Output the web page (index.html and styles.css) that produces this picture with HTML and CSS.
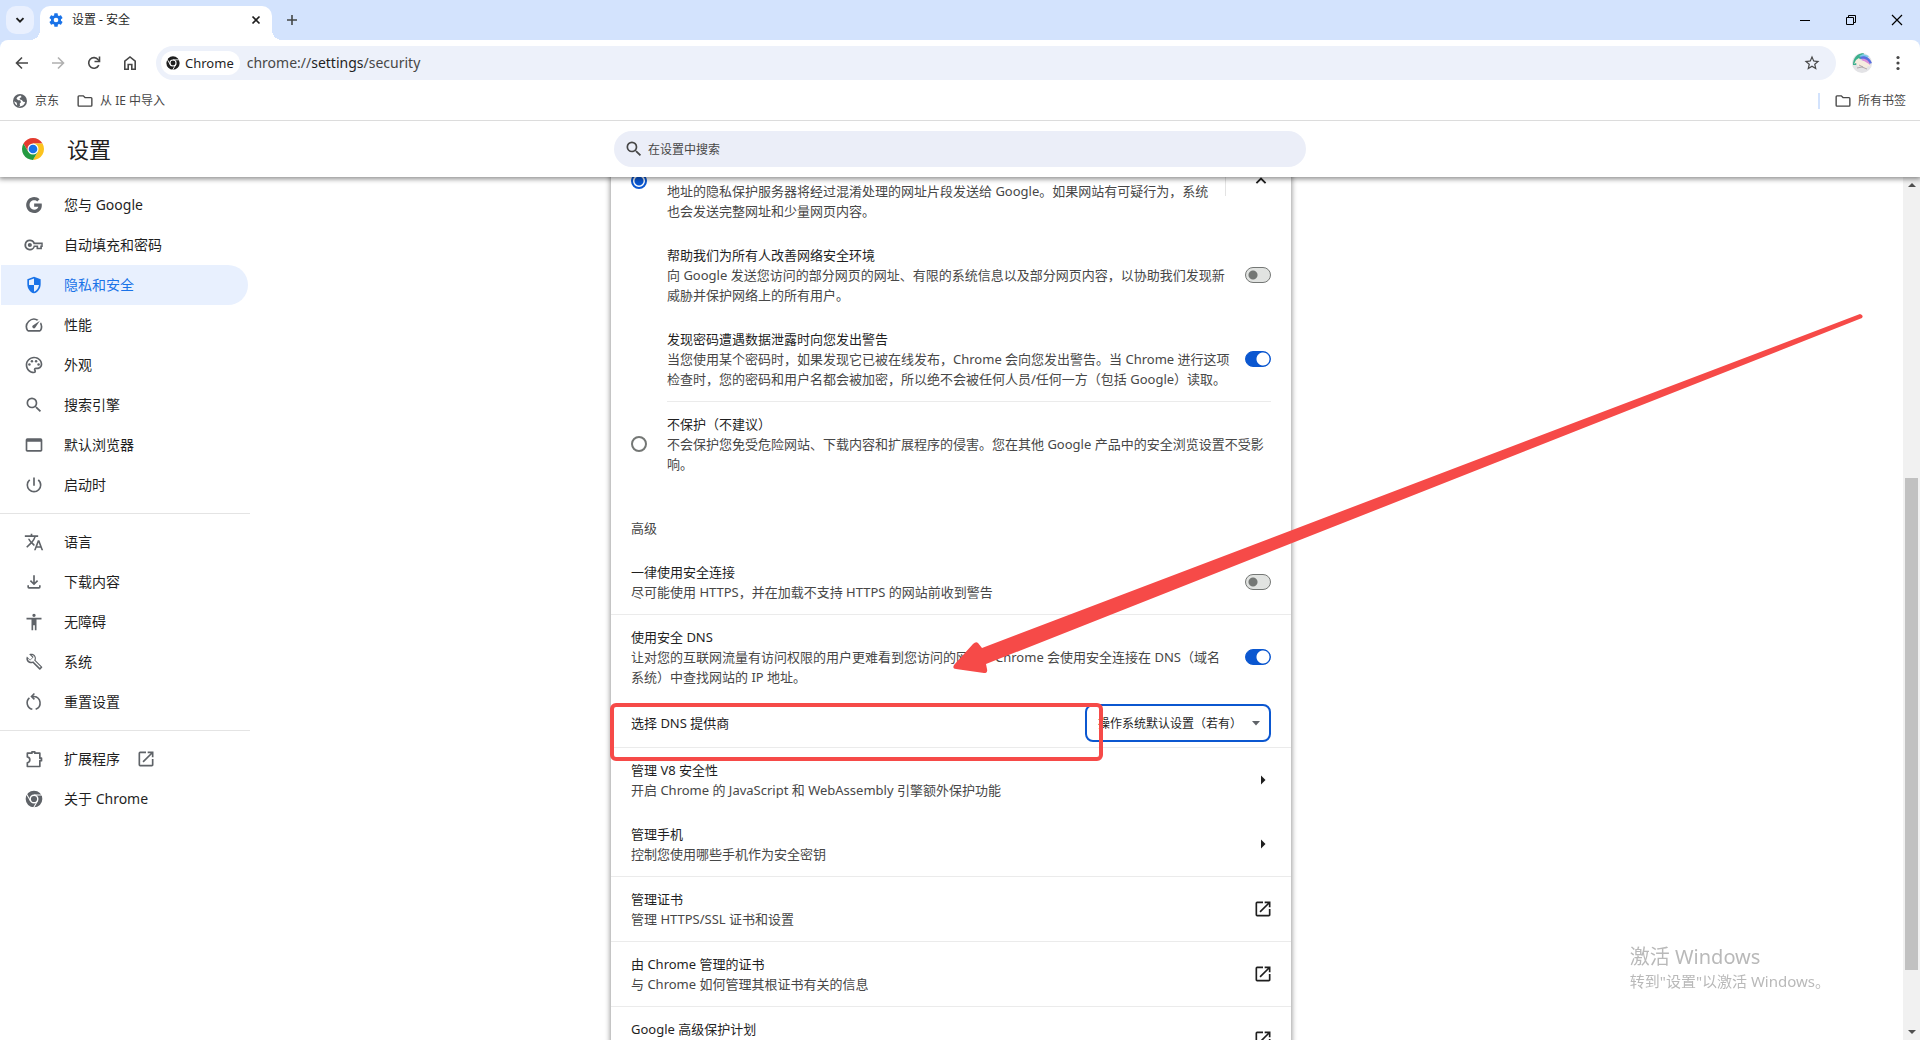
FILE: index.html
```html
<!DOCTYPE html>
<html lang="zh-CN">
<head>
<meta charset="utf-8">
<title>设置 - 安全</title>
<link rel="stylesheet" href="styles.css">
</head>
<body>
<svg class="sprite" aria-hidden="true">
  <symbol id="i-chrome" viewBox="0 0 24 24"><path fill-rule="evenodd" d="M12 2a10 10 0 1 0 0 20a10 10 0 0 0 0-20zM12 6.600a5.400 5.400 0 1 1 0 10.800a5.400 5.400 0 0 1 0-10.800z"/><circle cx="12" cy="12" r="3.700"/><g class="cut"><path d="M12 7.200h10"/><path d="M12 7.200h10" transform="rotate(120 12 12)"/><path d="M12 7.200h10" transform="rotate(240 12 12)"/></g></symbol>
  <symbol id="i-folder" viewBox="0 0 18 14"><path d="M2 1h5l2 2h7a1 1 0 0 1 1 1v8a1 1 0 0 1-1 1H2a1 1 0 0 1-1-1V2a1 1 0 0 1 1-1z" fill="none" stroke="currentColor" stroke-width="1.600"/></symbol>
  <symbol id="i-search" viewBox="0 0 24 24"><path d="M15.500 14h-.790l-.280-.270A6.471 6.471 0 0 0 16 9.500 6.500 6.500 0 1 0 9.500 16c1.610 0 3.090-.590 4.230-1.570l.270.280v.790l5 4.990L20.490 19l-4.990-5zm-6 0C7.010 14 5 11.990 5 9.500S7.010 5 9.500 5 14 7.010 14 9.500 11.990 14 9.500 14z"/></symbol>
  <symbol id="i-open" viewBox="0 0 24 24"><path d="M19 19H5V5h7V3H5a2 2 0 0 0-2 2v14a2 2 0 0 0 2 2h14c1.100 0 2-.900 2-2v-7h-2v7zM14 3v2h3.590l-9.830 9.830 1.410 1.410L19 6.410V10h2V3h-7z"/></symbol>
</svg>

<header class="browser">
  <div class="tabstrip">
    <button class="tab-search" aria-label="搜索标签页"><svg width="12" height="12" viewBox="0 0 12 12"><path d="M2.500 4.200 6 7.700l3.500-3.500" fill="none" stroke="currentColor" stroke-width="1.900"/></svg></button>
    <div class="tab">
      <svg class="gear" width="16" height="16" viewBox="0 0 24 24"><path d="M19.430 12.980c.040-.320.070-.640.070-.980s-.030-.660-.070-.980l2.110-1.650c.190-.150.240-.420.120-.640l-2-3.460c-.120-.220-.390-.300-.610-.220l-2.490 1c-.520-.400-1.080-.730-1.690-.980l-.380-2.650A.488.488 0 0 0 14 2h-4c-.250 0-.460.180-.490.420l-.380 2.650c-.610.250-1.170.590-1.690.980l-2.490-1c-.230-.090-.490 0-.610.220l-2 3.460c-.130.220-.070.490.120.640l2.110 1.650c-.040.320-.070.650-.070.980s.030.660.070.980l-2.110 1.650c-.190.150-.240.420-.120.640l2 3.460c.120.220.390.300.610.220l2.490-1c.520.400 1.080.730 1.690.980l.380 2.650c.030.240.240.420.490.420h4c.250 0 .460-.180.490-.420l.380-2.650c.610-.250 1.170-.590 1.690-.980l2.490 1c.230.090.490 0 .610-.220l2-3.460c.120-.220.070-.490-.120-.640l-2.110-1.650zM12 15.500a3.500 3.500 0 1 1 0-7 3.500 3.500 0 0 1 0 7z"/></svg>
      <span class="tab-title">设置 - 安全</span>
      <button class="plain" aria-label="关闭标签页"><svg width="16" height="16" viewBox="0 0 16 16"><path d="m4.500 4.500 7 7m0-7-7 7" stroke="currentColor" stroke-width="1.700"/></svg></button>
    </div>
    <button class="plain new-tab" aria-label="新标签页"><svg width="16" height="16" viewBox="0 0 16 16"><path d="M8 3v10M3 8h10" stroke="currentColor" stroke-width="1.600"/></svg></button>
    <div class="window-buttons">
      <button class="plain" aria-label="最小化"><svg width="12" height="12" viewBox="0 0 12 12"><path d="M1 6.500h10" stroke="currentColor"/></svg></button>
      <button class="plain" aria-label="还原"><svg width="12" height="12" viewBox="0 0 12 12"><path d="M1.500 3.500h7v7h-7zM3.500 3V1.500h7v7H9" fill="none" stroke="currentColor"/></svg></button>
      <button class="plain" aria-label="关闭"><svg width="12" height="12" viewBox="0 0 12 12"><path d="m1 1 10 10m0-10L1 11" stroke="currentColor" stroke-width="1.200"/></svg></button>
    </div>
  </div>
  <div class="chrome-body">
    <div class="toolbar">
      <button class="plain nav" aria-label="后退"><svg width="16" height="16" viewBox="0 0 16 16"><path d="M14 8H3M8 2.500 2.500 8 8 13.500" fill="none" stroke="currentColor" stroke-width="1.600"/></svg></button>
      <button class="plain nav off" aria-label="前进" disabled><svg width="16" height="16" viewBox="0 0 16 16"><path d="M2 8h11M8 2.500 13.500 8 8 13.500" fill="none" stroke="currentColor" stroke-width="1.600"/></svg></button>
      <button class="plain nav" aria-label="重新加载"><svg width="16" height="16" viewBox="0 0 16 16"><path d="M12.800 10.200A5.300 5.300 0 1 1 12.200 4.700L13.500 6" fill="none" stroke="currentColor" stroke-width="1.600"/><path d="M13.500 1.500v5h-5" fill="none" stroke="currentColor" stroke-width="1.600"/></svg></button>
      <button class="plain nav" aria-label="主页"><svg width="16" height="16" viewBox="0 0 16 16"><path d="M2.800 6.200 8 2l5.200 4.200v8h-3.400V9.500H6.200v4.700H2.800z" fill="none" stroke="currentColor" stroke-width="1.600"/></svg></button>
      <div class="omnibox">
        <span class="chip"><svg width="16" height="16"><use href="#i-chrome"/></svg>Chrome</span>
        <span class="url">chrome://<b>settings</b>/security</span>
        <button class="plain star" aria-label="为此页添加书签"><svg width="18" height="18" viewBox="0 0 24 24"><path d="m22 9.240-7.190-.620L12 2 9.190 8.630 2 9.240l5.460 4.730L5.820 21 12 17.270 18.180 21l-1.630-7.030L22 9.240zM12 15.400l-3.760 2.270 1-4.280-3.320-2.880 4.380-.380L12 6.100l1.710 4.040 4.380.380-3.320 2.880 1 4.280L12 15.400z"/></svg></button>
      </div>
      <button class="plain avatar" aria-label="个人资料"><svg width="20" height="20" viewBox="0 0 20 20"><defs><clipPath id="round"><circle cx="10" cy="10" r="10"/></clipPath></defs><g clip-path="url(#round)"><path fill="#e3e3e6" d="M0 0h20v20H0z"/><path fill="#3bb08c" d="M1 12C1 5 5 0 12 0l-1 4-5 4-2 4z"/><path fill="#7ccbe8" d="M7 3l4-2 6 2-2 2-6-1z"/><path fill="#5a6fe0" d="M8 4c5-2 10 1 12 6l-3 1c-1-3-4-5-8-5z"/><path fill="#d98fd8" d="M9 6c4-1 8 1 9 6l-2 0-5-4z"/><path fill="#f6ecdf" d="M4 7l3-2 2 3 3 0 5 3 2 3-3-1-2 3-3-3-5 0-2-3-2 1z"/><path fill="none" stroke="#a59a9c" stroke-width=".8" d="M5 15l5-1 5 2M7 12l4 2"/></g></svg></button>
      <button class="plain menu" aria-label="菜单"><svg width="16" height="16" viewBox="0 0 16 16"><circle cx="8" cy="2.500" r="1.600"/><circle cx="8" cy="8" r="1.600"/><circle cx="8" cy="13.500" r="1.600"/></svg></button>
    </div>
    <nav class="bookmarks" aria-label="书签">
      <a href="#"><svg width="16" height="16" viewBox="0 0 16 16"><circle cx="8" cy="8" r="7" fill="#5f6368"/><path fill="#fff" d="M8.500 2.500c-2 .5-3.500 1.500-4 3.200l1.700 1.600h2L9 9.200 7.700 10.500 8 13l-1.500.2C9.500 14 12.500 12 13.200 9l-2-.2L9.800 7 8 6.500 7.600 5.200 9.600 4z"/><path fill="#fff" d="m2.200 8.300 2.500 1.500.5 2.700C3.500 11.600 2.500 10.200 2.200 8.300z"/></svg>京东</a>
      <a href="#"><svg width="16" height="12"><use href="#i-folder"/></svg>从 IE 中导入</a>
      <a href="#" class="all"><svg width="16" height="12"><use href="#i-folder"/></svg>所有书签</a>
    </nav>
  </div>
</header>

<header class="settings-head">
  <h1><svg width="24" height="24" viewBox="0 0 48 48"><path fill="#e33b2e" d="M4.950 13A22 22 0 0 1 43.050 13H24l-9.530 16.500z"/><path fill="#fcc31e" d="M43.050 13A22 22 0 0 1 24 46l9.530-16.500L24 13z"/><path fill="#249a41" d="M24 46A22 22 0 0 1 4.950 13l9.520 16.500h19.060z"/><circle cx="24" cy="24" r="11" fill="#fff"/><circle cx="24" cy="24" r="8.700" fill="#1a73e8"/></svg>设置</h1>
  <label class="search"><svg width="20" height="20"><use href="#i-search"/></svg><input type="search" placeholder="在设置中搜索" aria-label="在设置中搜索"></label>
</header>

<div class="body">
  <nav class="side" aria-label="设置菜单">
    <a href="#"><svg width="16" height="16" viewBox="0 0 24 24"><path d="M12.240 9.800v4.800h6.300c-.500 2.300-2.600 4.400-6.300 4.400-3.900 0-6.900-3.100-6.900-7s3-7 6.900-7c2.100 0 3.600.800 4.600 1.700l3.500-3.500C18.200 1.200 15.500 0 12.240 0c-6.600 0-12 5.400-12 12s5.400 12 12 12c6.900 0 11.500-4.900 11.500-11.700 0-.900-.100-1.700-.200-2.500z"/></svg>您与 Google</a>
    <a href="#"><svg width="20" height="20" viewBox="0 0 24 24"><path d="M7 5.500A6.500 6.500 0 1 0 13 14.500h2V17h6.500v-2.500h1v-5.500H13A6.500 6.500 0 0 0 7 5.500zm0 2a4.500 4.500 0 0 1 4.400 3.500h9.400v1.700h-1.300v2.500h-2.500v-2.500h-5.400A4.500 4.500 0 1 1 7 7.500z"/><circle cx="7" cy="12" r="2.500"/></svg>自动填充和密码</a>
    <a href="#" class="on" aria-current="page"><svg width="20" height="20" viewBox="0 0 24 24"><path d="M12 2 4 5v6c0 5.200 3.400 9.900 8 11 4.600-1.100 8-5.800 8-11V5l-8-3zm0 2.200V12h6c-.500 3.700-2.900 6.900-6 8V12H6V6.400l6-2.200z"/></svg>隐私和安全</a>
    <a href="#"><svg width="20" height="20" viewBox="0 0 24 24"><path d="m20.380 8.570-1.230 1.850a8 8 0 0 1-.22 7.580H5.070A8 8 0 0 1 15.580 6.850l1.850-1.230A10 10 0 0 0 3.350 19a2 2 0 0 0 1.720 1h13.850a2 2 0 0 0 1.740-1 10 10 0 0 0-.27-10.440zm-9.790 6.840a2 2 0 0 0 2.830 0l5.660-8.490-8.490 5.660a2 2 0 0 0 0 2.830z"/></svg>性能</a>
    <a href="#"><svg width="20" height="20" viewBox="0 0 24 24"><path d="M12 22C6.490 22 2 17.510 2 12S6.490 2 12 2s10 4.040 10 9c0 3.310-2.690 6-6 6h-1.770c-.280 0-.500.220-.500.500 0 .120.050.230.130.330.410.470.640 1.060.640 1.670A2.500 2.500 0 0 1 12 22zm0-18c-4.410 0-8 3.590-8 8s3.590 8 8 8c.280 0 .500-.220.500-.500a.540.540 0 0 0-.140-.350c-.410-.460-.630-1.050-.630-1.650a2.500 2.500 0 0 1 2.500-2.500H16c2.210 0 4-1.790 4-4 0-3.860-3.590-7-8-7z"/><circle cx="6.500" cy="11.500" r="1.500"/><circle cx="9.500" cy="7.500" r="1.500"/><circle cx="14.500" cy="7.500" r="1.500"/><circle cx="17.500" cy="11.500" r="1.500"/></svg>外观</a>
    <a href="#"><svg width="20" height="20"><use href="#i-search"/></svg>搜索引擎</a>
    <a href="#"><svg width="20" height="20" viewBox="0 0 24 24"><path d="M20 4H4a2 2 0 0 0-2 2v12c0 1.100.900 2 2 2h16c1.100 0 2-.900 2-2V6a2 2 0 0 0-2-2zm0 14H4V8h16v10z"/></svg>默认浏览器</a>
    <a href="#"><svg width="20" height="20" viewBox="0 0 24 24"><path d="M13 3h-2v10h2V3zm4.830 2.170-1.420 1.420A6.920 6.920 0 0 1 19 12a7 7 0 1 1-11.410-5.420L6.170 5.170A8.932 8.932 0 0 0 3 12a9 9 0 0 0 18 0c0-2.740-1.230-5.180-3.170-6.830z"/></svg>启动时</a>
    <hr>
    <a href="#"><svg width="20" height="20" viewBox="0 0 24 24"><path d="m12.870 15.070-2.540-2.510.030-.030A17.520 17.520 0 0 0 14.070 6H17V4h-7V2H8v2H1v2h11.170C11.500 7.920 10.440 9.750 9 11.350 8.070 10.320 7.300 9.190 6.690 8h-2c.730 1.630 1.730 3.170 2.980 4.560l-5.090 5.020L4 19l5-5 3.110 3.110.760-2.040zM18.500 10h-2L12 22h2l1.120-3h4.750L21 22h2l-4.500-12zm-2.620 7 1.620-4.330L19.120 17h-3.240z"/></svg>语言</a>
    <a href="#"><svg width="20" height="20" viewBox="0 0 24 24"><path d="m12 16-5-5 1.400-1.400 2.600 2.550V4h2v8.150l2.600-2.550L17 11l-5 5zm-6 4a2 2 0 0 1-2-2v-2h2v2h12v-2h2v2a2 2 0 0 1-2 2H6z"/></svg>下载内容</a>
    <a href="#"><svg width="20" height="20" viewBox="0 0 24 24"><path d="M12 2a2 2 0 1 1 0 4 2 2 0 0 1 0-4zm9 7h-6v13h-2v-6h-2v6H9V9H3V7h18v2z"/></svg>无障碍</a>
    <a href="#"><svg width="20" height="20" viewBox="0 0 24 24"><path d="m21.700 18.600-7.800-7.800c.8-2 .4-4.400-1.200-6.100C11 2.900 8.300 2.600 6.200 3.600l3.900 3.900-2.800 2.700-3.800-3.800C2.300 8.500 2.700 11.200 4.400 12.900c1.700 1.700 4.100 2.100 6.100 1.300l7.800 7.800c.4.400 1 .4 1.400 0l2-2c.4-.4.400-1 0-1.400zM19 20l-8-8c-1.500 1-3.700 1.100-5.200-.5-.8-.8-1.200-1.800-1.100-2.800l2.600 2.500 4.300-4.200L9 4.500c1.100 0 2 .4 2.800 1.200 1.500 1.500 1.500 3.700.3 5.200l8 8z" transform="translate(0 -1)"/></svg>系统</a>
    <a href="#"><svg width="20" height="20" viewBox="0 0 24 24"><path fill="none" stroke="currentColor" stroke-width="1.900" d="M10 20.800A8 8 0 0 1 6.500 7M14 20.800A8 8 0 0 0 12 5.300H9.500M12.500 1.800 9 5.300l3.500 3.500"/></svg>重置设置</a>
    <hr>
    <a href="#"><svg width="20" height="20" viewBox="0 0 24 24"><path fill="none" stroke="currentColor" stroke-width="2" stroke-linejoin="round" d="M4 5h5.500V3.500h3.500V5H19v6h2v3h-2v7H4v-4.500c4-.500 4-6.500 0-7z"/></svg>扩展程序<svg class="ext" width="20" height="20"><use href="#i-open"/></svg></a>
    <a href="#"><svg width="20" height="20"><use href="#i-chrome"/></svg>关于 Chrome</a>
  </nav>

  <main class="card">
    <section class="inset">
      <div class="row standard">
        <input type="radio" name="protection" id="standard" checked>
        <label class="text" for="standard"><small>地址的隐私保护服务器将经过混淆处理的网址片段发送给 Google。如果网站有可疑行为，系统<br>也会发送完整网址和少量网页内容。</small></label>
        <button class="plain expand" aria-label="收起"><svg width="20" height="20" viewBox="0 0 24 24"><path d="M6.500 14.500 12 9l5.500 5.500" fill="none" stroke="currentColor" stroke-width="2.200"/></svg></button>
      </div>
      <div class="row sub">
        <label class="text" for="improve">帮助我们为所有人改善网络安全环境<small>向 Google 发送您访问的部分网页的网址、有限的系统信息以及部分网页内容，以协助我们发现新<br>威胁并保护网络上的所有用户。</small></label>
        <input type="checkbox" class="toggle" id="improve">
      </div>
      <div class="row sub">
        <label class="text" for="leak">发现密码遭遇数据泄露时向您发出警告<small>当您使用某个密码时，如果发现它已被在线发布，Chrome 会向您发出警告。当 Chrome 进行这项<br>检查时，您的密码和用户名都会被加密，所以绝不会被任何人员/任何一方（包括 Google）读取。</small></label>
        <input type="checkbox" class="toggle" id="leak" checked>
      </div>
      <hr>
      <div class="row">
        <input type="radio" name="protection" id="none">
        <label class="text" for="none">不保护（不建议）<small>不会保护您免受危险网站、下载内容和扩展程序的侵害。您在其他 Google 产品中的安全浏览设置不受影<br>响。</small></label>
      </div>
    </section>
    <h2>高级</h2>
    <div class="row">
      <label class="text" for="https">一律使用安全连接<small>尽可能使用 HTTPS，并在加载不支持 HTTPS 的网站前收到警告</small></label>
      <input type="checkbox" class="toggle" id="https">
    </div>
    <hr>
    <div class="row">
      <label class="text" for="dns">使用安全 DNS<small>让对您的互联网流量有访问权限的用户更难看到您访问的网站。Chrome 会使用安全连接在 DNS（域名<br>系统）中查找网站的 IP 地址。</small></label>
      <input type="checkbox" class="toggle" id="dns" checked>
      <svg class="arrow" width="920" height="370" viewBox="0 0 920 370" aria-hidden="true"><path d="M908 1 30 335l-4-5q-2-2-5 1L2 352q-2 4 2 4l28 4q4 0 3-4l-1-5L910 5q2-3-2-4z"/></svg>
    </div>
    <div class="row provider">
      <label class="text" for="provider">选择 DNS 提供商</label>
      <span class="picker"><select id="provider"><option>操作系统默认设置（若有）</option></select><svg width="10" height="5" viewBox="0 0 10 5"><path d="M1 0h8L5 4.500z"/></svg></span>
      <span class="marker"></span>
    </div>
    <hr>
    <a href="#" class="row link"><span class="text">管理 V8 安全性<small>开启 Chrome 的 JavaScript 和 WebAssembly 引擎额外保护功能</small></span><svg width="20" height="20" viewBox="0 0 20 20"><path d="M8 5.500v9l4.500-4.500z"/></svg></a>
    <a href="#" class="row link"><span class="text">管理手机<small>控制您使用哪些手机作为安全密钥</small></span><svg width="20" height="20" viewBox="0 0 20 20"><path d="M8 5.500v9l4.500-4.500z"/></svg></a>
    <hr>
    <a href="#" class="row link"><span class="text">管理证书<small>管理 HTTPS/SSL 证书和设置</small></span><svg width="20" height="20"><use href="#i-open"/></svg></a>
    <hr>
    <a href="#" class="row link"><span class="text">由 Chrome 管理的证书<small>与 Chrome 如何管理其根证书有关的信息</small></span><svg width="20" height="20"><use href="#i-open"/></svg></a>
    <hr>
    <a href="#" class="row link"><span class="text">Google 高级保护计划<small>为可能遭到针对性攻击的任何用户提供个人 Google 账号保护</small></span><svg width="20" height="20"><use href="#i-open"/></svg></a>
  </main>

  <div class="scrollbar" aria-hidden="true"><i class="up"></i><span class="track"><span class="thumb"></span></span><i class="down"></i></div>
</div>
<aside class="watermark"><strong>激活 Windows</strong>转到"设置"以激活 Windows。</aside>
</body>
</html>
```
FILE: styles.css
```css
* { box-sizing: border-box; }
body {
  margin: 0; height: 100vh; display: flex; flex-direction: column; overflow: hidden;
  background: #fff; color: #1f1f1f;
  font: 13px/20px "Noto Sans", "Noto Sans CJK SC", sans-serif;
}
a { color: inherit; text-decoration: none; }
svg { display: block; flex: none; fill: currentColor; }
.sprite { position: absolute; width: 0; height: 0; }
.cut { stroke: #fff; stroke-width: 1.2; }
.plain { border: 0; padding: 0; background: none; color: inherit; display: grid; place-items: center; }

/* window frame */
.browser { flex: none; background: #d3e3fd; }
.tabstrip { height: 40px; display: flex; padding: 6px 0 0 6px; }
.tab-search { width: 28px; height: 28px; border: 0; border-radius: 10px; background: #e9f0fe; display: grid; place-items: center; padding: 0; color: #1f1f1f; }
.tab {
  position: relative; width: 232px; margin-left: 6px; padding: 0 8px 6px; background: #fff;
  border-radius: 10px 10px 0 0; display: flex; align-items: center; gap: 8px; font-size: 12px;
}
.tab::before, .tab::after { content: ""; position: absolute; bottom: 0; width: 10px; height: 10px; }
.tab::before { left: -10px; background: radial-gradient(circle at 0 0, transparent 10px, #fff 10px); }
.tab::after { right: -10px; background: radial-gradient(circle at 100% 0, transparent 10px, #fff 10px); }
.tab-title { flex: 1; }
.gear { fill: #1a73e8; }
.new-tab { width: 28px; height: 28px; margin-left: 6px; color: #444746; }
.window-buttons { margin-left: auto; display: flex; }
.window-buttons button { width: 46px; height: 28px; color: #000; }
.chrome-body { background: #fff; border-radius: 8px 8px 0 0; border-bottom: 1px solid #dcdcdc; color: #474747; }
.toolbar { display: flex; align-items: center; padding: 6px 6px 0 4px; }
.nav { width: 36px; height: 34px; }
.off { color: #b0b0b0; }
.omnibox { flex: 1; height: 34px; margin-left: 8px; padding: 0 15px 0 5px; border-radius: 17px; background: #edf1fa; display: flex; align-items: center; }
.chip { height: 24px; padding: 0 6px 0 4px; border-radius: 12px; background: #fff; display: flex; align-items: center; gap: 4px; color: #1f1f1f; }
.url { flex: 1; margin-left: 7px; font-size: 14px; }
.url b { font-weight: 400; color: #1f1f1f; }
.avatar { width: 20px; margin-left: 16px; }
.menu { width: 32px; margin-left: 10px; }
.bookmarks { height: 40px; display: flex; gap: 18px; padding: 2px 14px 0 12px; font-size: 12px; align-items: center; }
.bookmarks a { display: flex; align-items: center; gap: 7px; }
.bookmarks .all { margin-left: auto; border-left: 2px solid #d3e3fd; height: 16px; padding-left: 15px; }

/* settings header */
.settings-head {
  flex: none; position: relative; z-index: 1; height: 56px; background: #fff;
  display: grid; grid-template-columns: 1fr minmax(0, 692px) 1fr; align-items: center;
  box-shadow: 0 1px 5px 1px rgba(0, 0, 0, .45); clip-path: inset(0 0 -10px 0);
}
h1 { margin: 0 0 0 21px; display: flex; align-items: center; gap: 22px; font-size: 22px; font-weight: 400; line-height: 28px; }
.search { height: 36px; border-radius: 18px; background: #ebeef8; display: flex; align-items: center; gap: 4px; padding: 0 10px; color: #474747; }
.search input { flex: 1; min-width: 0; border: 0; outline: 0; background: none; font: inherit; font-size: 12px; padding: 2px 0 0; }
.search input::placeholder { color: #474747; }

/* page body */
.body { flex: 1; min-height: 0; overflow: hidden; position: relative; display: grid; grid-template: minmax(0, 1fr) / minmax(250px, 1fr) minmax(0, 680px) 1fr 18px; }
.side { width: 250px; padding-top: 8px; font-size: 14px; }
.side a { display: flex; align-items: center; gap: 20px; height: 40px; width: 247px; margin-left: 1px; padding-left: 23px; border-radius: 0 20px 20px 0; }
.side svg { color: #5f6368; width: 20px; }
.side .on { background: #e8f0fe; color: #1a73e8; }
.side .on svg { color: #1a73e8; }
.side .ext { margin-left: -4px; }
hr { border: 0; height: 1px; margin: 0; background: #ebebeb; }
.side hr { margin: 8px 0; background: #e4e4e4; }

.card { margin-top: -48px; align-self: start; background: #fff; box-shadow: 0 0 5px 1px rgba(0, 0, 0, .4); }
.inset hr { margin: 0 20px 0 56px; }
.row { position: relative; display: flex; align-items: center; gap: 16px; padding: 12px 20px; }
.standard .text { padding-top: 40px; }
.text { flex: 1; min-width: 0; white-space: nowrap; }
small { display: block; font-size: 13px; color: #474747; }
.sub { padding-left: 56px; }
input[type=radio] { appearance: none; flex: none; width: 16px; height: 16px; margin: 0 4px 0 0; border: 2px solid #747775; border-radius: 50%; }
input[type=radio]:checked { border-color: #0b57d0; background: radial-gradient(circle, #0b57d0 4px, #fff 5px); }
.toggle { appearance: none; flex: none; width: 26px; height: 16px; margin: 0; border: 1px solid #747775; border-radius: 8px; background: radial-gradient(circle at 7px 7px, #747775 4px, #e1e3e1 5px); }
.toggle:checked { border-color: #0b57d0; background: radial-gradient(circle at 17px 7px, #fff 6px, #0b57d0 7px); }
.expand { width: 46px; height: 30px; border-left: 1px solid #e3e3e3; padding-left: 24px; }
h2 { margin: 32px 20px 12px; font-size: 13px; font-weight: 400; line-height: 20px; color: #474747; }
.provider { padding-block: 5px; height: 48px; }
.picker { position: relative; }
.picker select { appearance: none; display: block; width: 186px; height: 38px; padding: 2px 10px 0 11px; border: 2px solid #0b57d0; border-radius: 8px; background: #fff; font: inherit; font-size: 12px; color: #1f1f1f; }
.picker svg { position: absolute; right: 10px; top: 17px; color: #5f6368; }
.link svg { margin-right: -2px; }

/* annotations laid over the card */
.marker { position: absolute; z-index: 2; left: -1px; top: 4px; width: 493px; height: 58px; border: 4px solid #f64a48; border-radius: 6px; pointer-events: none; }
.arrow { position: absolute; z-index: 2; left: 341px; top: -302px; color: #f64a48; pointer-events: none; }

.scrollbar { grid-column: 4; justify-self: end; width: 17px; display: flex; flex-direction: column; align-items: center; background: #f1f1f1; padding: 6px 0; }
.up, .down { border: 4px solid transparent; }
.up { border-top: 0; border-bottom-color: #505050; }
.down { border-bottom: 0; border-top-color: #505050; }
.track { flex: 1; width: 13px; padding: 291px 0 60px; display: flex; }
.thumb { flex: 1; background: #c1c1c1; }
.watermark { position: fixed; right: 90px; bottom: 49px; font-size: 15px; line-height: 20px; color: #b9b9b9; }
.watermark strong { display: block; font-size: 20px; font-weight: 400; line-height: 28px; }
```
